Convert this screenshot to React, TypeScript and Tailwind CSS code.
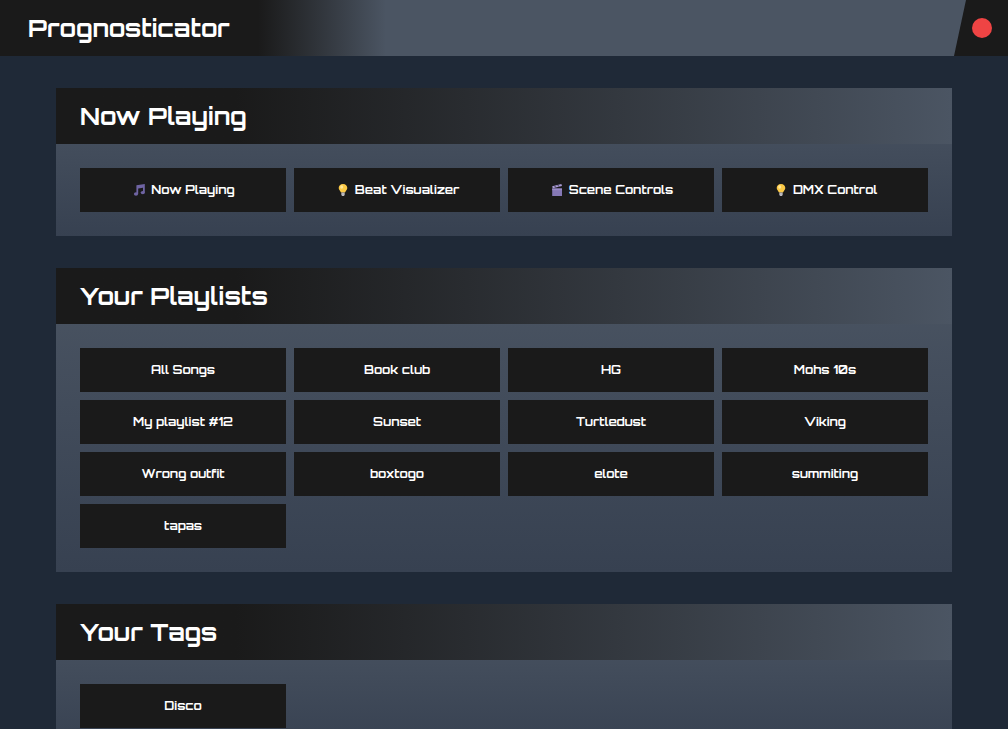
import React from "react";

type IconName = "note" | "bulb" | "clapper";
type Item = { label: string; icon?: IconName };
type Section = { title: string; items: Item[] };

const plain = (labels: string[]): Item[] => labels.map((label) => ({ label }));

const sections: Section[] = [
  {
    title: "Now Playing",
    items: [
      { icon: "note", label: "Now Playing" },
      { icon: "bulb", label: "Beat Visualizer" },
      { icon: "clapper", label: "Scene Controls" },
      { icon: "bulb", label: "DMX Control" },
    ],
  },
  {
    title: "Your Playlists",
    items: plain([
      "All Songs",
      "Book club",
      "HG",
      "Mohs 10s",
      "My playlist #12",
      "Sunset",
      "Turtledust",
      "Viking",
      "Wrong outfit",
      "boxtogo",
      "elote",
      "summiting",
      "tapas",
    ]),
  },
  {
    title: "Your Tags",
    items: plain(["Disco"]),
  },
];

function Icon({ name }: { name: IconName }) {
  return (
    <svg viewBox="0 0 16 16" className="size-4 shrink-0" aria-hidden="true">
      {name === "note" && (
        <g fill="#6f64a3">
          <path d="M5.4 3.2 L13.8 2 V10.4 H12 V5.8 L7.2 6.6 V12 H5.4 Z" />
          <ellipse cx="5" cy="12" rx="2.1" ry="1.7" />
          <ellipse cx="11.8" cy="10.6" rx="2.1" ry="1.7" />
        </g>
      )}
      {name === "bulb" && (
        <>
          <path
            d="M8 2 C5.3 2 3.7 3.8 3.7 6 C3.7 8 5.4 8.8 6 10.6 H10 C10.6 8.8 12.3 8 12.3 6 C12.3 3.8 10.7 2 8 2 Z"
            fill="#fbc946"
          />
          <ellipse cx="6.7" cy="5" rx="1.5" ry="1.8" fill="#ffe799" />
          <path d="M6.3 10.6 H9.7 V12.8 L9 14 H7 L6.3 12.8 Z" fill="#b9b7bd" />
        </>
      )}
      {name === "clapper" && (
        <>
          <path d="M3.2 6.4 H13 V14 H3.2 Z" fill="#8578b5" />
          <path d="M3.2 4.2 L12.4 2 L13 4 L3.7 6.2 Z" fill="#a99bd3" />
          <path d="M5.4 3.7 L6.9 5.5 M8.6 2.9 L10.1 4.7" stroke="#3b3357" strokeWidth="1" />
          <path d="M3.2 6.6 H13 V8.2 H3.2 Z" fill="#9a8cc7" />
        </>
      )}
    </svg>
  );
}

function Panel({ title, items }: Section) {
  return (
    <section className="bg-linear-to-b from-[#4b5563] to-[#374151]">
      <h2 className="bg-linear-to-r from-[#1a1a1a] from-20% to-[#4b5563] px-6 py-3 text-2xl leading-8 font-bold">
        {title}
      </h2>
      <div className="grid grid-cols-4 gap-2 p-6">
        {items.map((item) => (
          <button
            key={item.label}
            type="button"
            className="flex items-center justify-center gap-1 bg-[#1a1a1a] px-4 py-3 text-xs leading-5 font-bold"
          >
            {item.icon && <Icon name={item.icon} />}
            {item.label}
          </button>
        ))}
      </div>
    </section>
  );
}

export default function App() {
  return (
    <div className="h-screen overflow-y-auto bg-[#1f2937] font-['Orbitron','DejaVu_Sans',sans-serif] text-white [scrollbar-width:none]">
      <header className="flex h-14 items-stretch bg-[#4b5563]">
        <h1 className="flex items-center bg-[#1a1a1a] px-7 text-2xl leading-8 font-bold">
          Prognosticator
        </h1>
        <div className="w-32 bg-linear-to-r from-[#1a1a1a] to-[#4b5563]" />
        <div className="ml-auto flex items-center bg-[#1a1a1a] pr-4 pl-[18px] [clip-path:polygon(12px_0,100%_0,100%_100%,0_100%)]">
          <span className="size-5 rounded-full bg-[#ef4444]" />
        </div>
      </header>
      <main className="flex flex-col gap-8 px-14 py-8">
        {sections.map((section) => (
          <Panel key={section.title} {...section} />
        ))}
      </main>
    </div>
  );
}
